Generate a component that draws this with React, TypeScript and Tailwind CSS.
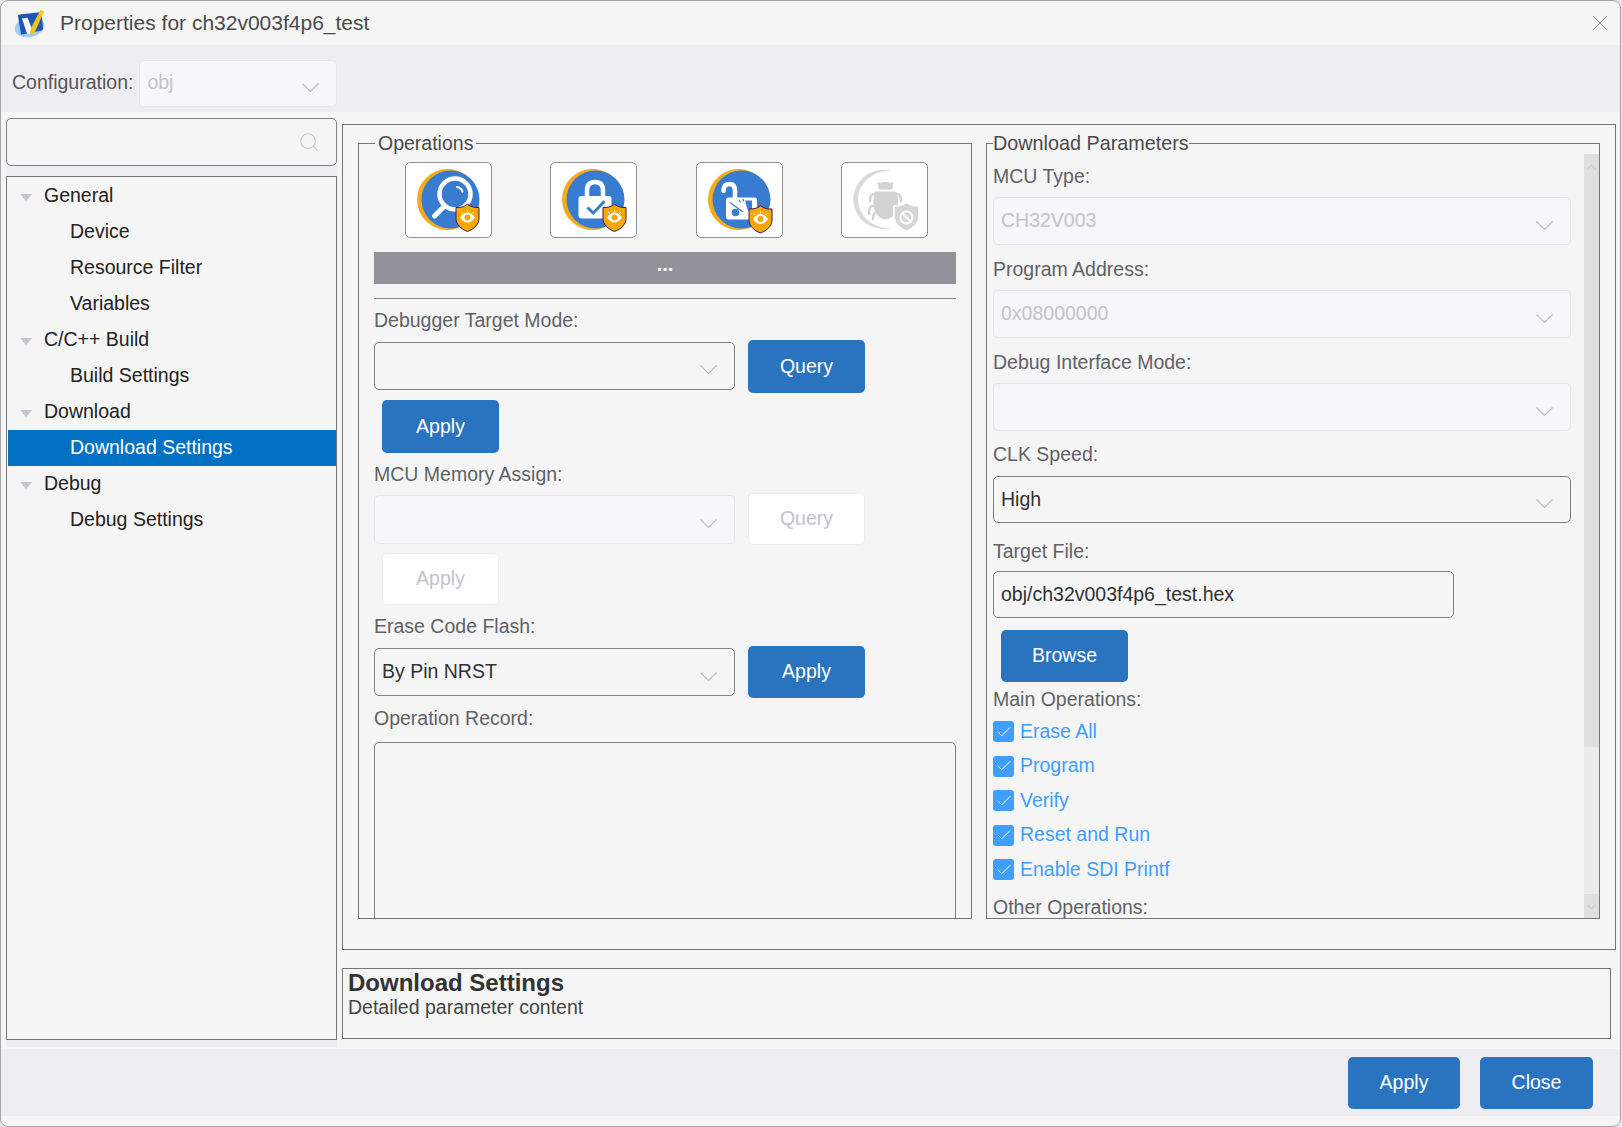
import { Check, ChevronDown, ChevronUp, Search, X } from "lucide-react";

const font = "font-['Liberation_Sans',Arial,sans-serif]";

function Shield({ x, y }: { x: number; y: number }) {
  return (
    <g transform={`translate(${x} ${y})`}>
      <path d="M12.500 0.800C16 3.500 20 4.200 24 4v11c0 6-5 10.500-11.500 13C6 25.500 1 21 1 15V4C5 4.200 9 3.500 12.500 0.800Z" fill="#f6a800" stroke="#3b1a63" strokeWidth="1" />
      <path d="M5 14c2.500-3.500 5-5 7.500-5s5 1.500 7.500 5c-2.500 3.500-5 5-7.500 5S7.500 17.500 5 14Z" fill="#fff" />
      <circle cx="12.500" cy="14" r="3" fill="#f6a800" />
      <path d="M6 8.500l1.500 1.500M12.500 6.500v2M19 8.500L17.500 10" stroke="#fff" strokeWidth="1" />
    </g>
  );
}

function Disc() {
  return (
    <>
      <ellipse cx="41.500" cy="36.500" rx="30.500" ry="30.500" fill="#f5ab1c" />
      <circle cx="44.500" cy="36.500" r="29" fill="#377cd1" />
    </>
  );
}

function QueryIcon() {
  return (
    <svg width="85" height="74" viewBox="0 0 85 74">
      <Disc />
      <circle cx="49" cy="31" r="15.500" fill="none" stroke="#fff" strokeWidth="4.500" />
      <path d="M38 43.500L28.500 53" stroke="#fff" strokeWidth="5" strokeLinecap="round" />
      <path d="M51 24c3 .5 5 2.500 5.500 5" fill="none" stroke="#fff" strokeWidth="2" strokeLinecap="round" />
      <Shield x={49} y={40.500} />
    </svg>
  );
}

function LockIcon() {
  return (
    <svg width="85" height="74" viewBox="0 0 85 74">
      <Disc />
      <path d="M36 35V27.500C36 21.500 39 19 44 19s8 2.500 8 8.500V35" fill="none" stroke="#fff" strokeWidth="4.500" />
      <rect x="27.500" y="33" width="33" height="22.500" rx="3" fill="#fff" />
      <path d="M36.500 44.500L42.300 50 53.500 38.300" fill="none" stroke="#377cd1" strokeWidth="3" />
      <Shield x={51} y={40.500} />
    </svg>
  );
}

function UnlockIcon() {
  return (
    <svg width="85" height="74" viewBox="0 0 85 74">
      <Disc />
      <path d="M26.500 28C26.500 23 29 21 32.500 21S38 23 38 28V35" fill="none" stroke="#fff" strokeWidth="4.500" strokeLinecap="round" />
      <rect x="29" y="34.500" width="31" height="22" rx="2.500" fill="#fff" />
      <circle cx="38.500" cy="49.500" r="3.800" fill="#377cd1" />
      <path d="M48 37.500h7v10h-4c-1-3-2-6-3-10Z" fill="#377cd1" />
      <path d="M33 39.500L46 49M42 37l1.500 2.500M46 36l.5 2.500" stroke="#377cd1" strokeWidth="1.300" />
      <Shield x={51} y={42} />
    </svg>
  );
}

function BugIcon() {
  return (
    <svg width="85" height="74" viewBox="0 0 85 74">
      <path d="M50 7.500C28 3.500 11.500 18 11.500 36.500S28 69.500 50 65.500C33 66 16 54 16 36.500S33 7 50 7.500Z" fill="#dadada" />
      <path d="M36 23c1-3 3-4 7.500-4S50 20 51 23l-1 3.500H37Z" fill="#d2d2d2" />
      <path d="M36 19.500l2.500 3M51 19.500l-2.500 3" stroke="#d2d2d2" strokeWidth="2" />
      <path d="M33.500 28.500h20.500c2 4 2.500 8 2 13-1 8-5 14-12.500 15C36 55.500 32 49 31.500 41c-.3-5 .5-9 2-12.500Z" fill="#d2d2d2" />
      <path d="M33 31c-4 0-5 1.500-5 7M54 31c4 0 5 1.500 5 7M31 43c-3 0-4 2-4 8M33 50c-1.500 1-2 2.500-2 6" fill="none" stroke="#d2d2d2" strokeWidth="2.500" strokeLinecap="round" />
      <path d="M64.500 39.500C68 42 72 43 77 43v11c0 6-5 11-12.500 14.500C57 65 52 60 52 54V43c5 0 9-1 12.500-3.500Z" fill="#d6d6d6" stroke="#fff" strokeWidth="1.500" />
      <circle cx="64.500" cy="54.500" r="6" fill="none" stroke="#fff" strokeWidth="2" />
      <path d="M60.500 50.500l8 8" stroke="#fff" strokeWidth="2" />
    </svg>
  );
}

function Logo() {
  return (
    <svg width="32" height="30" viewBox="0 0 32 30" className="shrink-0">
      <ellipse cx="15.500" cy="19" rx="15" ry="10" transform="rotate(-12 15.500 19)" fill="#9ccdf0" />
      <path d="M5.500 6.500L26 4.300c1 0 1.500.5 1.700 1.500L29 20.500c0 1-.5 1.500-1.500 2L8.500 26.500c-1 .2-1.500-.3-1.700-1.300L4 8c0-1 .5-1.400 1.500-1.500Z" fill="#1f55b8" />
      <path d="M8 10.500l5.500-.8L18 21l-2 4.500-3 .3Z" fill="#fff" />
      <path d="M17 20l9.500-18 3.500 1.200-9.500 21.800-4.500.5Z" fill="#f3c316" />
    </svg>
  );
}

function Caret() {
  return (
    <svg width="17" height="9" viewBox="0 0 17 9" className="mt-[8px] shrink-0">
      <path d="M.5.5l8 8 8-8" fill="none" stroke="#b9bdc5" strokeWidth="1.100" />
    </svg>
  );
}

type SelectProps = {
  value?: string;
  disabled?: boolean;
  className: string;
};

function Select({ value, disabled, className }: SelectProps) {
  return (
    <div className={`flex shrink-0 items-center justify-between rounded-[5px] border pl-[7px] pr-[17px] text-[19.5px] ${disabled ? "border-[#e4e7ed] bg-[#f5f7fa] text-[#c0c4cc]" : "border-[#808080] bg-[#f5f5f5] text-[#303133]"} ${className}`}>
      <span>{value}</span>
      <Caret />
    </div>
  );
}

function Btn({ label, disabled, className }: { label: string; disabled?: boolean; className: string }) {
  return (
    <button className={`flex shrink-0 items-center justify-center rounded-[5px] text-[19.5px] ${disabled ? "border border-[#ebeef5] bg-white text-[#c0c4cc]" : "bg-[#2a73bf] text-white"} ${className}`}>
      {label}
    </button>
  );
}

function FormLabel({ children, className }: { children: React.ReactNode; className: string }) {
  return <div className={`flex shrink-0 items-center text-[19.5px] leading-none text-[#606266] ${className}`}>{children}</div>;
}

const treeRows = [
  { label: "General", head: true },
  { label: "Device" },
  { label: "Resource Filter" },
  { label: "Variables" },
  { label: "C/C++ Build", head: true },
  { label: "Build Settings" },
  { label: "Download", head: true },
  { label: "Download Settings", active: true },
  { label: "Debug", head: true },
  { label: "Debug Settings" },
];

const checks = ["Erase All", "Program", "Verify", "Reset and Run", "Enable SDI Printf"];

export default function App() {
  return (
    <div className={`h-[1127px] w-[1622px] overflow-hidden bg-[#e8e8e8] ${font}`}>
      <div className="flex h-[1127px] w-[1621px] flex-col overflow-hidden rounded-[8px] border border-[#a6a6a6] bg-[#f5f5f5]">
        {/* title bar */}
        <div className="flex h-[44px] shrink-0 items-center pl-[13px] pr-[7px]">
          <Logo />
          <span className="ml-[14px] text-[21px] text-[#4a4a4a]">Properties for ch32v003f4p6_test</span>
          <X size={26} strokeWidth={0.9} className="ml-auto text-[#808080]" />
        </div>

        {/* configuration */}
        <div className="flex h-[67px] shrink-0 items-center bg-[#eeeef2] pl-[11px] pt-[9px]">
          <span className="text-[19.5px] text-[#555]">Configuration:</span>
          <Select value="obj" disabled className="ml-[6px] h-[47px] w-[198px]" />
        </div>

        <div className="flex min-h-0 flex-1 pl-[5px] pr-[4px]">
          {/* left tree */}
          <div className="flex w-[331px] shrink-0 flex-col pt-[6px]">
            <div className="flex h-[48px] shrink-0 items-center justify-end rounded-[5px] border border-[#808080] bg-[#f5f5f5] pr-[16px]">
              <Search size={22} strokeWidth={1.2} className="text-[#c0c4cc]" />
            </div>
            <div className="h-[10px] shrink-0 bg-[#eeeef2]" />
            <div className="h-[864px] shrink-0 border border-[#757575] bg-[#f5f5f5] pt-[1px]">
              {treeRows.map((row) => (
                <div key={row.label} className={`flex h-[36px] items-center text-[19.5px] ${row.active ? "ml-px mr-0 bg-[#0270c3] text-white" : "text-[#222]"}`}>
                  {row.head ? (
                    <>
                      <span className="ml-[13px] mt-[3px] h-0 w-0 border-x-[6px] border-t-[7px] border-x-transparent border-t-[#c0c4cc]" />
                      <span className="mb-[1px] ml-[12px]">{row.label}</span>
                    </>
                  ) : (
                    <span className={`mb-[1px] ${row.active ? "ml-[62px]" : "ml-[63px]"}`}>{row.label}</span>
                  )}
                </div>
              ))}
            </div>
            <div className="h-[7px] shrink-0 bg-[#eeeef2]" />
          </div>

          <div className="ml-[5px] flex min-w-0 flex-1 flex-col pt-[12px]">
            {/* main box */}
            <div className="flex h-[826px] shrink-0 border border-[#757575] pl-[15px] pr-[17px] pt-[7px]">
              {/* operations */}
              <fieldset className="h-[787px] w-[614px] shrink-0 overflow-hidden border border-[#757575] px-[15px]">
                <legend className="ml-[1px] px-[3px] text-[19.5px] leading-[22px] text-[#4a4a4a]">Operations</legend>
                <div className="flex justify-between pl-[31px] pr-[28px] pt-[8px]">
                  {[<QueryIcon key="q" />, <LockIcon key="l" />, <UnlockIcon key="u" />, <BugIcon key="b" />].map((icon) => (
                    <div key={icon.key} className="h-[76px] w-[87px] rounded-[5px] border border-[#909090] bg-white">{icon}</div>
                  ))}
                </div>
                <div className="mt-[14px] flex h-[32px] items-center justify-center bg-[#909399] pb-[8px] text-[20px] font-bold text-white">...</div>
                <div className="mt-[14px] h-px bg-[#8a8a8a]" />
                <FormLabel className="h-[41px] pt-[3px]">Debugger Target Mode:</FormLabel>
                <div className="flex items-center">
                  <Select className="mb-[2px] h-[48px] w-[361px]" />
                  <Btn label="Query" className="ml-[13px] h-[53px] w-[117px]" />
                </div>
                <Btn label="Apply" className="ml-[8px] mt-[7px] h-[53px] w-[117px]" />
                <FormLabel className="h-[40px] pt-[3px]">MCU Memory Assign:</FormLabel>
                <div className="flex items-center">
                  <Select disabled className="h-[49px] w-[361px]" />
                  <Btn label="Query" disabled className="ml-[13px] h-[52px] w-[117px]" />
                </div>
                <Btn label="Apply" disabled className="ml-[8px] mt-[8px] h-[52px] w-[117px]" />
                <FormLabel className="h-[41px] pt-[3px]">Erase Code Flash:</FormLabel>
                <div className="flex items-center">
                  <Select value="By Pin NRST" className="h-[48px] w-[361px]" />
                  <Btn label="Apply" className="ml-[13px] h-[52px] w-[117px]" />
                </div>
                <FormLabel className="h-[44px] pb-[3px]">Operation Record:</FormLabel>
                <div className="h-[220px] rounded-[5px] border border-[#808080]" />
              </fieldset>

              {/* download parameters */}
              <fieldset className="ml-[14px] h-[787px] w-[614px] min-w-0 shrink-0 overflow-hidden border border-[#757575] pl-[6px]">
                <legend className="text-[19.8px] leading-[22px] text-[#4a4a4a]">Download Parameters</legend>
                <div className="flex h-[765px]">
                  <div className="min-w-0 flex-1 overflow-hidden">
                    <FormLabel className="h-[43px] pt-[2px]">MCU Type:</FormLabel>
                    <Select value="CH32V003" disabled className="h-[48px] w-[578px]" />
                    <FormLabel className="h-[45px] pt-[4px]">Program Address:</FormLabel>
                    <Select value="0x08000000" disabled className="h-[48px] w-[578px]" />
                    <FormLabel className="h-[45px] pt-[4px]">Debug Interface Mode:</FormLabel>
                    <Select disabled className="h-[48px] w-[578px]" />
                    <FormLabel className="h-[45px] pt-[3px]">CLK Speed:</FormLabel>
                    <Select value="High" className="h-[47px] w-[578px]" />
                    <FormLabel className="h-[48px] pt-[9px]">Target File:</FormLabel>
                    <div className="flex h-[47px] w-[461px] items-center rounded-[5px] border border-[#808080] pl-[7px] text-[19.5px] text-[#303133]">obj/ch32v003f4p6_test.hex</div>
                    <Btn label="Browse" className="ml-[8px] mt-[12px] h-[52px] w-[127px]" />
                    <FormLabel className="h-[35px]">Main Operations:</FormLabel>
                    <div className="mt-[4px] flex flex-col gap-[13.500px]">
                      {checks.map((label) => (
                        <div key={label} className="flex h-[21px] items-center text-[19.5px] text-[#409eff]">
                          <span className="flex h-[21px] w-[21px] items-center justify-center rounded-[3px] bg-[#409eff]">
                            <Check size={18} strokeWidth={1.3} className="text-white" />
                          </span>
                          <span className="ml-[6px]">{label}</span>
                        </div>
                      ))}
                    </div>
                    <FormLabel className="mt-[12px] h-[32px]">Other Operations:</FormLabel>
                  </div>
                  {/* scrollbar */}
                  <div className="flex w-[15px] shrink-0 flex-col bg-[#ececec]">
                    <div className="flex h-[593px] justify-center bg-[#dfdfdf] pt-[3px]">
                      <ChevronUp size={20} strokeWidth={1} className="text-[#b4b4b4]" />
                    </div>
                    <div className="flex-1" />
                    <div className="flex h-[25px] items-center justify-center bg-[#dfdfdf]">
                      <ChevronDown size={20} strokeWidth={1} className="text-[#b4b4b4]" />
                    </div>
                  </div>
                </div>
              </fieldset>
            </div>

            {/* description */}
            <div className="mr-[5px] mt-[18px] h-[71px] shrink-0 border border-[#757575] pl-[5px]">
              <div className="text-[24px] font-bold leading-[27px] text-[#333]">Download Settings</div>
              <div className="text-[19.5px] leading-[22px] text-[#444]">Detailed parameter content</div>
            </div>
          </div>
        </div>

        {/* footer */}
        <div className="mb-[10px] flex h-[67px] shrink-0 items-center justify-end gap-[20px] bg-[#eeeef2] pr-[27px]">
          <Btn label="Apply" className="h-[52px] w-[112px]" />
          <Btn label="Close" className="h-[52px] w-[113px]" />
        </div>
      </div>
    </div>
  );
}
